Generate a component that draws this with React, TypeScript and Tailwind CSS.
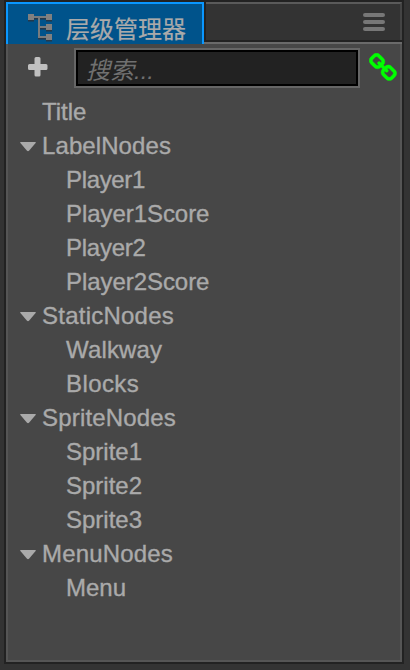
import React from "react";

type TreeNode = { name: string; tracking?: string; children?: TreeNode[] };

const nodes: TreeNode[] = [
  { name: "Title" },
  {
    name: "LabelNodes",
    tracking: "tracking-[0.09px]",
    children: [
      { name: "Player1", tracking: "tracking-[-0.35px]" },
      { name: "Player1Score", tracking: "tracking-[-0.06px]" },
      { name: "Player2", tracking: "tracking-[-0.25px]" },
      { name: "Player2Score", tracking: "tracking-[-0.06px]" },
    ],
  },
  {
    name: "StaticNodes",
    tracking: "tracking-[0.24px]",
    children: [{ name: "Walkway", tracking: "tracking-[0.15px]" }, { name: "Blocks", tracking: "tracking-[0.4px]" }],
  },
  {
    name: "SpriteNodes",
    tracking: "tracking-[0.18px]",
    children: [{ name: "Sprite1" }, { name: "Sprite2" }, { name: "Sprite3" }],
  },
  { name: "MenuNodes", tracking: "tracking-[0.18px]", children: [{ name: "Menu" }] },
];

function HierarchyIcon() {
  return (
    <svg className="block h-7 w-[26px] shrink-0" viewBox="0 0 26 28">
      <g fill="#25384a" transform="translate(0 1.5)">
        <path d="M0 0h6v6H0zM18 0h6v6h-6zM18 10h6v6h-6zM18 20h6v6h-6z" />
        <path d="M6 2h12v2h-6v8h6v2h-6v8h6v2h-8V4H6z" />
      </g>
      <path d="M0 0h6v6H0zM18 0h6v6h-6zM18 10h6v6h-6zM18 20h6v6h-6z" fill="#808080" />
      <path d="M6 2h12v2h-6v8h6v2h-6v8h6v2h-8V4H6z" fill="#777b7e" />
    </svg>
  );
}

function LinkIcon() {
  return (
    <svg className="block h-[30px] w-[30px] shrink-0" viewBox="0 0 1792 1792" fill="#00ff00" stroke="#00ff00" strokeWidth="30">
      <path d="M1456 1216q0-40-28-68l-208-208q-28-28-68-28-42 0-72 32 3 3 19 18.5t21.5 21.5 15 19 13 25.5 3.5 27.5q0 40-28 68t-68 28q-15 0-27.5-3.5t-25.5-13-19-15-21.5-21.5-18.5-19q-33 31-33 73 0 40 28 68l206 207q27 27 68 27 40 0 68-26l147-146q28-28 28-67zm-703-705q0-40-28-68l-206-207q-28-28-68-28-39 0-68 27l-147 146q-28 28-28 67 0 40 28 68l208 208q27 27 68 27 42 0 72-31-3-3-19-18.5t-21.5-21.5-15-19-13-25.5-3.5-27.5q0-40 28-68t68-28q15 0 27.5 3.5t25.5 13 19 15 21.5 21.5 18.5 19q33-31 33-73zm895 705q0 120-85 203l-147 146q-83 83-203 83-121 0-204-85l-206-207q-83-83-83-203 0-123 88-209l-88-88q-86 88-208 88-120 0-204-84l-208-208q-84-84-84-204t85-203l147-146q83-83 203-83 121 0 204 85l206 207q83 83 83 203 0 123-88 209l88 88q86-88 208-88 120 0 204 84l208 208q84 84 84 204z" />
    </svg>
  );
}

function Row({ node, depth }: { node: TreeNode; depth: number }) {
  return (
    <>
      <div className={depth > 0 ? "flex h-[34px] items-center pl-9" : "flex h-[34px] items-center pl-3"}>
        <div className="flex w-[22px] shrink-0 pt-px">
          {node.children && (
            <svg className="h-[10px] w-4" viewBox="0 0 16 10" fill="#aaaaaa">
              <path d="M.8 0h14.400q1.100 0 .4 1L9 8.700q-1 .9-2 0L.4 1Q-.3 0 .8 0z" />
            </svg>
          )}
        </div>
        <span className={`leading-[34px] whitespace-nowrap [-webkit-text-stroke:0.35px_#aaaaaa] ${node.tracking ?? ""}`}>
          {node.name}
        </span>
      </div>
      {node.children?.map((child) => (
        <Row key={child.name} node={child} depth={depth + 1} />
      ))}
    </>
  );
}

export default function App() {
  return (
    <div className="h-[670px] w-[410px] bg-[#333333] pr-1.5 pb-1.5 pl-1 font-['Liberation_Sans','Noto_Sans_CJK_SC',sans-serif] text-2xl text-[#aaaaaa]">
      <div className="flex h-[664px] flex-col border-2 border-[#222222]">
        <header className="flex h-[42px] shrink-0 bg-[#222222]">
          <div className="flex w-[198px] items-start border-2 border-b-0 border-[#0a97ff] bg-[#00538b] pt-[10px] pl-5">
            <HierarchyIcon />
            <span className="-mt-px ml-[12px] leading-[34px] whitespace-nowrap [-webkit-text-stroke:0.2px_#aaaaaa]">
              层级管理器
            </span>
          </div>
          <div className="flex flex-1 flex-col border-b-2 border-[#6a6a6a]">
            <div className="ml-0.5 flex h-[38px] justify-end border-t-2 border-r-2 border-t-[#5a5a5a] border-r-[#444444] bg-[#333333] pt-[9px] pr-[15px]">
              <div className="flex flex-col gap-[3px]">
                <i className="h-1 w-[22px] rounded-full bg-[#777777]" />
                <i className="h-1 w-[22px] rounded-full bg-[#777777]" />
                <i className="h-1 w-[22px] rounded-full bg-[#777777]" />
              </div>
            </div>
          </div>
        </header>
        <main className="flex-1 border-2 border-t-0 border-[#555555] bg-[#474747]">
          <div className="flex h-[51px] pt-1">
            <svg className="mt-[9px] ml-5 block h-5 w-5 shrink-0" viewBox="0 0 20 20" fill="#c0c0c0">
              <path d="M8 0h3q1.5 0 1.5 1.5V7H18q1.5 0 1.5 1.5v3Q19.500 13 18 13h-5.500v5.000Q12.500 19.500 11 19.500H8Q6.500 19.500 6.500 18v-5H1.500Q0 13 0 11.500v-3Q0 7 1.500 7h5V1.500Q6.500 0 8 0z" />
            </svg>
            <div className="ml-[26px] h-10 w-[286px] shrink-0 border-2 border-[#666666]">
              <input
                aria-label="搜索"
                placeholder="搜索..."
                className="block h-9 w-full border-2 border-black bg-[#222222] pt-1.5 pl-2 text-2xl italic outline-none placeholder:text-[#707070]"
              />
            </div>
            <div className="mt-[5px] ml-[9px]">
              <LinkIcon />
            </div>
          </div>
          {nodes.map((node) => (
            <Row key={node.name} node={node} depth={0} />
          ))}
        </main>
      </div>
    </div>
  );
}
